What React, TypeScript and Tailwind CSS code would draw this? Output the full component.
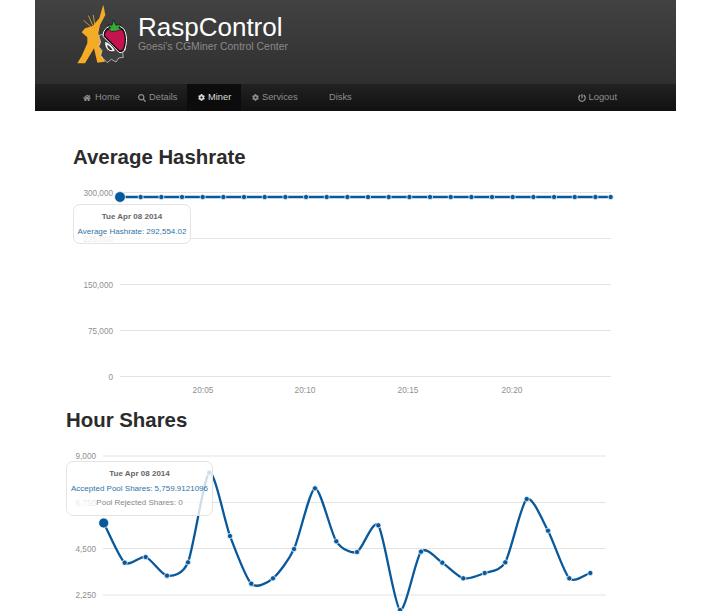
import { FaHome, FaSearch, FaCog, FaPowerOff } from "react-icons/fa";

const LINE = "#08599c";
const FONT = "'Liberation Sans', Arial, sans-serif";

type P = [number, number];

function smooth(pts: P[]) {
  const grad = pts.map((p, i) => {
    const a = pts[i - 1] ?? p;
    const b = pts[i + 1] ?? p;
    return (b[1] - a[1]) / (b[0] - a[0]);
  });
  let d = `M${pts[0][0]},${pts[0][1]}`;
  for (let i = 1; i < pts.length; i++) {
    const [x0, y0] = pts[i - 1];
    const [x1, y1] = pts[i];
    const ix = (x1 - x0) / 4;
    d += `C${x0 + ix},${y0 + ix * grad[i - 1]} ${x1 - ix},${y1 - ix * grad[i]} ${x1},${y1}`;
  }
  return d;
}

const hashPts: P[] = [
  ...Array.from({ length: 24 }, (_, k): P => [120 + 20.67 * k, 197]),
  [610.7, 197],
];

const sharePts: P[] = [
  [103.7, 523], [124.7, 562.7], [145.7, 557], [167, 575.7], [188, 562.3], [209.3, 472.7],
  [230, 536], [251.3, 583.7], [273, 578.3], [294, 549], [315, 488.3], [336.3, 541.3],
  [357, 552], [378.3, 525.3], [400, 610], [421, 551.7], [442.3, 562.7], [463.3, 578.3],
  [484.7, 573], [505.3, 562.3], [526.7, 499], [548, 530.7], [569.3, 578.3], [590.3, 573],
];

function Grid({ rows, x0, x1, labelX }: { rows: [string, number][]; x0: number; x1: number; labelX: number }) {
  return (
    <>
      {rows.map(([label, y]) => (
        <g key={label}>
          <line x1={x0} x2={x1} y1={y} y2={y} stroke="#e3e3e3" strokeWidth="1" />
          <text x={labelX} y={y + 3} textAnchor="end" fontSize="8.2" fill="#8f8f8f" fontFamily={FONT}>
            {label}
          </text>
        </g>
      ))}
    </>
  );
}

function Dots({ pts, big }: { pts: P[]; big: number }) {
  return (
    <>
      {pts.map(([x, y], i) => (
        <circle key={i} cx={x} cy={y} r={i === 0 ? big : 2.6} fill={LINE} stroke="#fff" strokeWidth="0.7" />
      ))}
    </>
  );
}

function Logo() {
  return (
    <svg width="70" height="70" viewBox="0 0 210 210" className="block shrink-0">
      <g stroke="#e8a92f" strokeWidth="2.5" strokeLinecap="round">
        <line x1="56" y1="42" x2="68" y2="70" />
        <line x1="42" y1="56" x2="62" y2="74" />
        <line x1="70" y1="40" x2="74" y2="66" />
      </g>
      <path
        d="M100 8L106 39L90 69L85 94L92 124L100 164L105 179L82 182L72 139L60 159L45 184L22 184L35 162L52 124L52 106L35 91L45 79L68 72L88 49L95 24Z"
        fill="#f4ab25"
      />
      {/* gear */}
      <path
        d="M86 100L104 96L160 128L168 142L158 152L160 166L146 168L138 180L124 172L112 182L100 170L92 160L96 146L86 134L92 120Z"
        fill="#3f3f3f"
        stroke="#e8e8e8"
        strokeWidth="2"
      />
      {/* berry */}
      <path
        d="M110 78C124 68 150 68 162 82C172 100 172 126 162 146C158 152 150 154 146 150L100 104C98 94 102 84 110 78Z"
        fill="#111"
        stroke="#fff"
        strokeWidth="3"
      />
      <path d="M114 84C126 76 148 76 158 88C166 102 166 124 158 142L150 146L106 102C104 94 108 88 114 84Z" fill="#c4134f" />
      <path d="M112 80L122 78L114 68L126 70L130 54L138 70L152 66L146 78L156 82L136 88L124 88Z" fill="#34ad38" stroke="#111" strokeWidth="2" />
      {/* mouth arc */}
      <path d="M104 118C114 120 130 132 136 146C122 156 102 144 104 118Z" fill="#f4f4f4" stroke="#111" strokeWidth="2" />
      <path d="M112 128C118 131 124 137 127 143C120 146 111 140 112 128Z" fill="#333" />
    </svg>
  );
}

function NavItem({ icon, label, className }: { icon?: React.ReactNode; label: string; className: string }) {
  return (
    <a className={`flex h-full items-center gap-[3px] text-[9.3px] text-[#8f8f8f] ${className}`}>
      {icon}
      <span>{label}</span>
    </a>
  );
}

export default function App() {
  return (
    <div className="h-[611px] w-[710px] overflow-hidden bg-white" style={{ fontFamily: FONT }}>
      <header className="ml-[35px] w-[641px]">
        <div className="flex h-[84px] items-start bg-gradient-to-b from-[#424242] to-[#2f2f2f] pl-[35px] pt-[2px]">
          <Logo />
          <div className="ml-[-2px] pt-[11px]">
            <div className="text-[26px] leading-[28px] text-white">RaspControl</div>
            <div className="text-[10.45px] leading-[11px] text-[#8a8a8a]">Goesi's CGMiner Control Center</div>
          </div>
        </div>
        <nav className="flex h-[27px] items-center bg-gradient-to-b from-[#222222] to-[#111111] pl-[48px] pr-[59px]">
          <NavItem className="w-[55px] !gap-[4px]" icon={<FaHome size={8} />} label="Home" />
          <NavItem className="w-[49px]" icon={<FaSearch size={8} />} label="Details" />
          <NavItem className="w-[54px] bg-[#0c0c0c] pl-[11px] !text-[#dddddd]" icon={<FaCog size={7} />} label="Miner" />
          <NavItem className="w-[88px] pl-[11px]" icon={<FaCog size={7} />} label="Services" />
          <NavItem className="w-[40px]" label="Disks" />
          <NavItem className="ml-auto" icon={<FaPowerOff size={8} />} label="Logout" />
        </nav>
      </header>

      <main>
        <h2 className="pl-[73px] pt-[31px] text-[20.4px] font-bold leading-[30px] text-[#2b2b2b]">Average Hashrate</h2>
        <div className="relative">
          <svg width="710" height="233" viewBox="0 172 710 233" className="block">
            <Grid
              rows={[["300,000", 192.5], ["225,000", 238.5], ["150,000", 284.5], ["75,000", 330.5], ["0", 376.5]]}
              x0={120}
              x1={611}
              labelX={113}
            />
            {[["20:05", 203], ["20:10", 305], ["20:15", 408], ["20:20", 512]].map(([t, x]) => (
              <text key={t} x={x} y={393} textAnchor="middle" fontSize="8.3" fill="#8f8f8f" fontFamily={FONT}>
                {t}
              </text>
            ))}
            <path d={smooth(hashPts)} fill="none" stroke={LINE} strokeWidth="2.6" />
            <Dots pts={hashPts} big={5.4} />
          </svg>
          <div className="absolute left-[73px] top-[32px] h-[40px] w-[118px] rounded-[7px] border border-[#e4e4e4] bg-white/80 text-center text-[8px] leading-[10px]">
            <div className="mt-[7px] font-bold text-[#666]">Tue Apr 08 2014</div>
            <div className="mt-[5px] text-[#2f74a8]">Average Hashrate: 292,554.02</div>
          </div>
        </div>

        <h2 className="pl-[66px] text-[20.4px] font-bold leading-[30px] text-[#2b2b2b]">Hour Shares</h2>
        <div className="relative">
          <svg width="710" height="176" viewBox="0 435 710 176" className="block">
            <Grid
              rows={[["9,000", 456], ["6,750", 502.5], ["4,500", 548.5], ["2,250", 595]]}
              x0={103}
              x1={606}
              labelX={96}
            />
            <path d={smooth(sharePts)} fill="none" stroke={LINE} strokeWidth="2.3" />
            <Dots pts={sharePts} big={5} />
          </svg>
          <div className="absolute left-[66px] top-[26px] h-[55px] w-[147px] rounded-[7px] border border-[#e4e4e4] bg-white/80 text-center text-[8px] leading-[10px]">
            <div className="mt-[7px] font-bold text-[#666]">Tue Apr 08 2014</div>
            <div className="mt-[5px] text-[#2f74a8]">Accepted Pool Shares: 5,759.9121096</div>
            <div className="mt-[4px] text-[#888]">Pool Rejected Shares: 0</div>
          </div>
        </div>
      </main>
    </div>
  );
}
